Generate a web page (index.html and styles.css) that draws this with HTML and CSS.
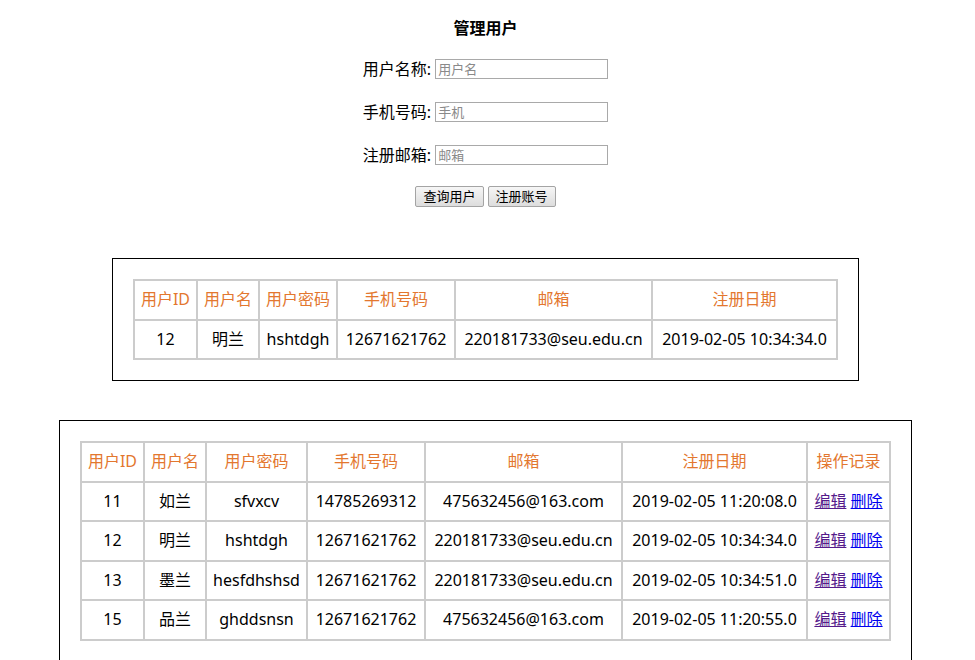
FILE: index.html
```html
<!DOCTYPE html>
<html lang="zh-CN">
<head>
<meta charset="utf-8">
<title>管理用户</title>
<link rel="stylesheet" href="styles.css">
</head>
<body>
<div class="page">
  <div class="title">管理用户</div>
  <form class="search">
    <div class="row"><label>用户名称:</label> <input type="text" placeholder="用户名"></div>
    <div class="row"><label>手机号码:</label> <input type="text" placeholder="手机"></div>
    <div class="row"><label>注册邮箱:</label> <input type="text" placeholder="邮箱"></div>
    <div class="row"><button type="button" class="btn">查询用户</button> <button type="button" class="btn">注册账号</button></div>
  </form>

  <div class="box box-result">
    <table class="grid">
      <thead>
        <tr>
          <th class="c-id">用户ID</th>
          <th class="c-name">用户名</th>
          <th class="c-pw1">用户密码</th>
          <th class="c-phone">手机号码</th>
          <th class="c-mail">邮箱</th>
          <th class="c-date">注册日期</th>
        </tr>
      </thead>
      <tbody>
        <tr><td>12</td><td>明兰</td><td>hshtdgh</td><td>12671621762</td><td>220181733@seu.edu.cn</td><td>2019-02-05 10:34:34.0</td></tr>
      </tbody>
    </table>
  </div>

  <div class="box box-list">
    <table class="grid">
      <thead>
        <tr>
          <th class="c-id">用户ID</th>
          <th class="c-name">用户名</th>
          <th class="c-pw2">用户密码</th>
          <th class="c-phone">手机号码</th>
          <th class="c-mail">邮箱</th>
          <th class="c-date">注册日期</th>
          <th class="c-op">操作记录</th>
        </tr>
      </thead>
      <tbody>
        <tr><td>11</td><td>如兰</td><td>sfvxcv</td><td>14785269312</td><td>475632456@163.com</td><td>2019-02-05 11:20:08.0</td><td><a class="visited" href="#e11">编辑</a> <a class="link" href="#d11">删除</a></td></tr>
        <tr><td>12</td><td>明兰</td><td>hshtdgh</td><td>12671621762</td><td>220181733@seu.edu.cn</td><td>2019-02-05 10:34:34.0</td><td><a class="visited" href="#e12">编辑</a> <a class="link" href="#d12">删除</a></td></tr>
        <tr><td>13</td><td>墨兰</td><td>hesfdhshsd</td><td>12671621762</td><td>220181733@seu.edu.cn</td><td>2019-02-05 10:34:51.0</td><td><a class="visited" href="#e13">编辑</a> <a class="link" href="#d13">删除</a></td></tr>
        <tr><td>15</td><td>品兰</td><td>ghddsnsn</td><td>12671621762</td><td>475632456@163.com</td><td>2019-02-05 11:20:55.0</td><td><a class="visited" href="#e15">编辑</a> <a class="link" href="#d15">删除</a></td></tr>
      </tbody>
    </table>
  </div>
</div>
</body>
</html>
```

FILE: styles.css
```css
html, body {
  margin: 0;
  padding: 0;
  background: #fff;
}

body {
  font-family: "Noto Sans", "Noto Sans CJK SC", sans-serif;
  font-size: 16px;
  color: #000;
}

.page {
  width: 971px;
  padding-top: 18px;
  text-align: center;
}

.title {
  font-weight: bold;
  font-size: 16px;
  line-height: 20px;
}

.search {
  margin: 9px 0 0 0;
}

.row {
  height: 43px;
  display: flex;
  align-items: center;
  justify-content: center;
  gap: 4px;
}

.row label {
  font-size: 16px;
  line-height: 20px;
}

.row input {
  box-sizing: border-box;
  width: 173px;
  height: 20px;
  margin: 0;
  padding: 1px 2px;
  border: 1px solid #a9a9a9;
  border-radius: 0;
  font-family: "Noto Sans", "Noto Sans CJK SC", sans-serif;
  font-size: 13px;
  color: #000;
  background: #fff;
  outline: none;
}

.row input::placeholder {
  color: #8a8a8a;
}

.btn {
  box-sizing: border-box;
  height: 21px;
  margin: -2px 0 0 0;
  padding: 0 7px;
  border: 1px solid #a4a4a4;
  border-radius: 2px;
  background: linear-gradient(#f6f6f6, #dddddd);
  font-family: "Noto Sans", "Noto Sans CJK SC", sans-serif;
  font-size: 13px;
  line-height: 19px;
  color: #000;
}

.box {
  display: inline-block;
  border: 1px solid #000;
  padding: 20px;
  vertical-align: top;
}

.box-result {
  margin-top: 39px;
}

.box-list {
  margin-top: 39px;
}

.grid {
  border-collapse: separate;
  border-spacing: 0;
  border: 1px solid #ccc;
  table-layout: fixed;
}

.grid th,
.grid td {
  box-sizing: border-box;
  border: 1px solid #ccc;
  padding: 8px 4px;
  line-height: 21.6px;
  font-size: 16px;
  font-weight: normal;
  text-align: center;
  white-space: nowrap;
}

.box-result .grid th,
.box-result .grid td {
  line-height: 21.5px;
}

.grid th {
  color: #e3772f;
}

.c-id { width: 63px; }
.c-name { width: 62px; }
.c-pw1 { width: 78px; }
.c-pw2 { width: 101px; }
.c-phone { width: 118px; }
.c-mail { width: 197px; }
.c-date { width: 185px; }
.c-op { width: 83px; }

.grid a {
  text-decoration: underline;
}

.grid a.visited {
  color: #551a8b;
}

.grid a.link {
  color: #0000ee;
}
```
